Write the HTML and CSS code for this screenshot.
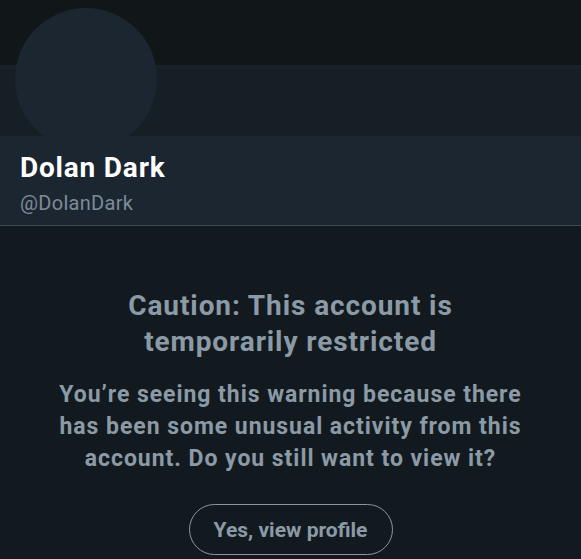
FILE: index.html
```html
<!DOCTYPE html>
<html>
<head>
<meta charset="utf-8">
<link rel="stylesheet" href="styles.css">
</head>
<body>
<div class="page">
  <div class="banner">
    <div class="band-top"></div>
    <div class="band-mid"></div>
    <div class="avatar"></div>
  </div>
  <div class="header">
    <div class="name">Dolan Dark</div>
    <div class="handle">@DolanDark</div>
  </div>
  <div class="warning">
    <h1 class="title">Caution: This account is<br>temporarily restricted</h1>
    <p class="body">You’re seeing this warning because there<br>has been some unusual activity from this<br>account. Do you still want to view it?</p>
    <button class="btn">Yes, view profile</button>
  </div>
</div>
</body>
</html>
```
FILE: styles.css
```css
html, body {
  margin: 0;
  padding: 0;
  background: #121a1f;
  font-family: Roboto, "Noto Sans", sans-serif;
}
.page {
  width: 581px;
  height: 559px;
  overflow: hidden;
  display: flex;
  flex-direction: column;
}
.banner {
  position: relative;
  height: 136px;
  display: flex;
  flex-direction: column;
}
.band-top {
  height: 65px;
  background: #111719;
}
.band-mid {
  flex: 1;
  background: linear-gradient(#1a232b 0, #161f26 5px, #161f26 100%);
}
.avatar {
  position: absolute;
  left: 15px;
  top: 8px;
  width: 142px;
  height: 142px;
  border-radius: 50%;
  background: #1c2631;
}
.header {
  position: relative;
  height: 90px;
  background: #1c2631;
  border-bottom: 1px solid #3b4b57;
  padding-left: 20px;
  box-sizing: border-box;
}
.name {
  color: #ffffff;
  font-weight: 700;
  font-size: 28px;
  line-height: 32px;
  padding-top: 16px;
  letter-spacing: 0.8px;
}
.handle {
  color: #7d8c98;
  font-size: 20px;
  line-height: 22px;
  margin-top: 8px;
  letter-spacing: 0.3px;
}
.warning {
  display: flex;
  flex-direction: column;
  align-items: center;
  text-align: center;
  color: #8b9aa6;
}
.title {
  margin: 62px 0 0;
  font-size: 28px;
  font-weight: 700;
  line-height: 36px;
  letter-spacing: 0.9px;
}
.body {
  margin: 19px 0 0;
  font-size: 23px;
  font-weight: 700;
  line-height: 32px;
  letter-spacing: 0.95px;
}
.btn {
  margin-top: 29px;
  width: 204px;
  height: 51px;
  border: 1.5px solid #8a979f;
  border-radius: 26px;
  background: transparent;
  color: #8b9aa6;
  font-family: Roboto, "Noto Sans", sans-serif;
  font-size: 21px;
  font-weight: 700;
  padding: 0;
}
```
